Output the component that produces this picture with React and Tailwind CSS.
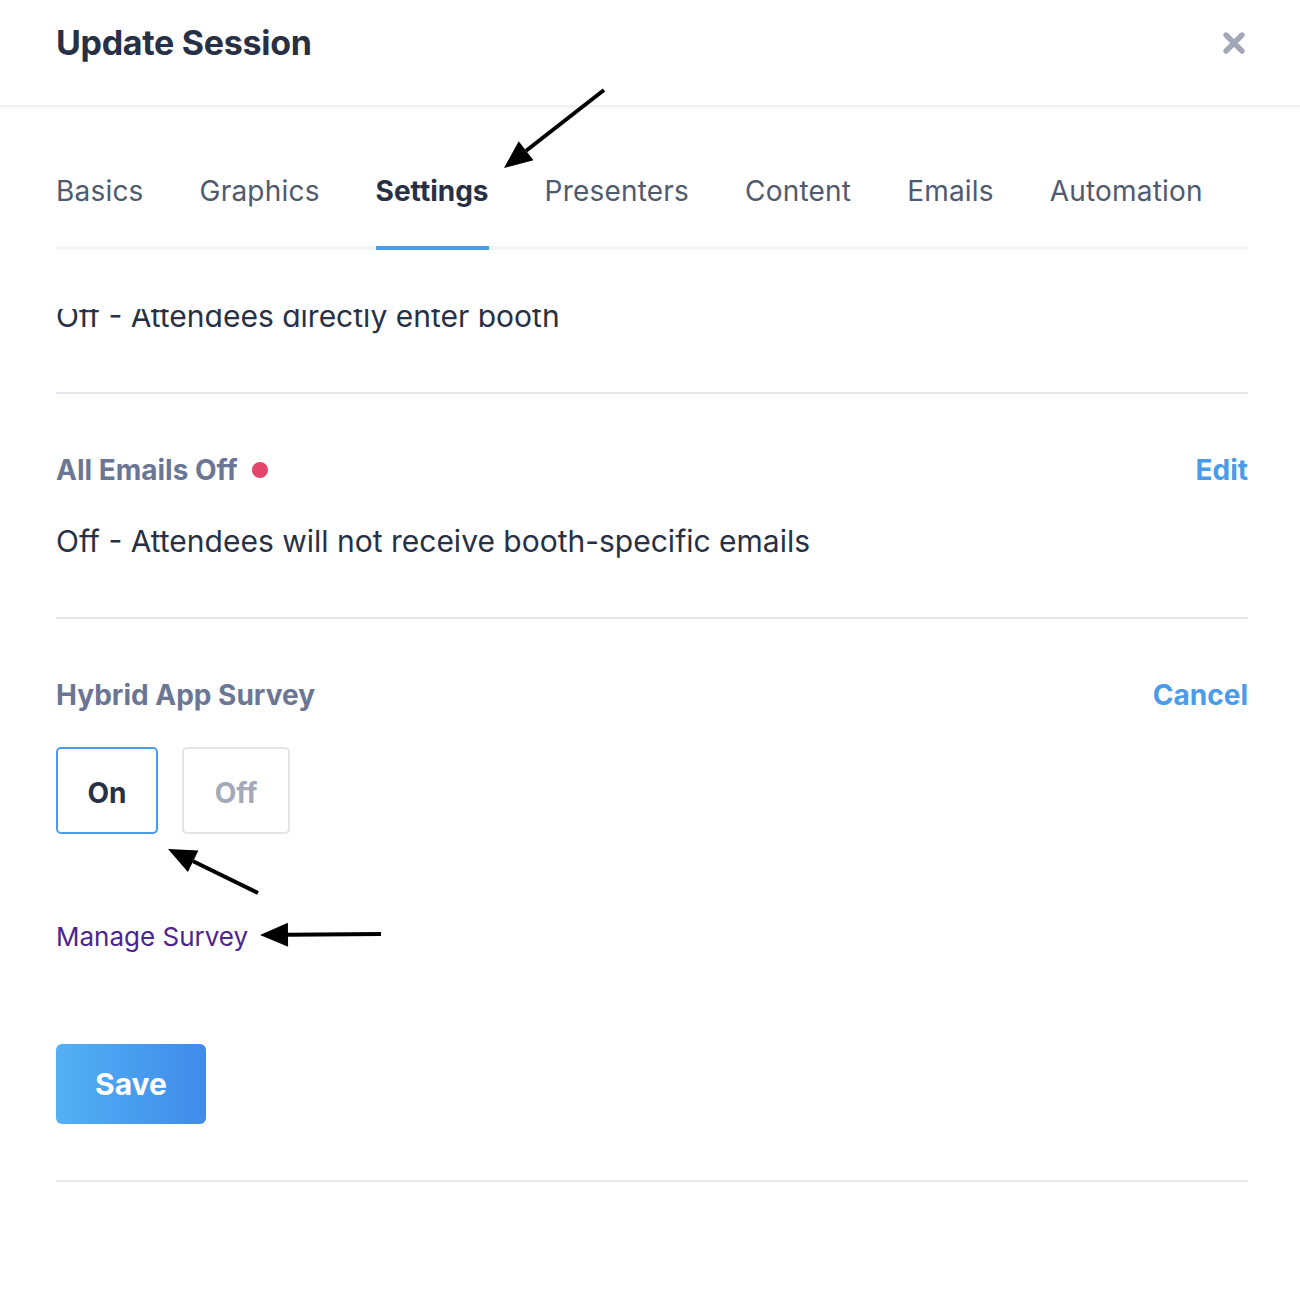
import { X } from 'lucide-react'

const FONT = { fontFamily: 'Inter, "Noto Sans", sans-serif' }

// Annotation arrow drawn over the page
function Arrow({ x1, y1, x2, y2 }) {
  const ang = Math.atan2(y2 - y1, x2 - x1)
  const len = 28
  const half = 12
  const bx = x2 - Math.cos(ang) * len
  const by = y2 - Math.sin(ang) * len
  const px = -Math.sin(ang) * half
  const py = Math.cos(ang) * half
  return (
    <g>
      <line x1={x1} y1={y1} x2={bx} y2={by} stroke="#000" strokeWidth="4" />
      <polygon points={`${x2},${y2} ${bx + px},${by + py} ${bx - px},${by - py}`} fill="#000" />
    </g>
  )
}

function Tab({ label, active }) {
  return (
    <div
      className={
        active
          ? 'text-[28px] leading-[34px] pb-[38px] -mb-[4px] border-b-4 border-[#4a9be8] font-bold text-[#273044]'
          : 'text-[28px] leading-[34px] pb-[38px] text-[#4f5a6e] tracking-[0.2px]'
      }
    >
      {label}
    </div>
  )
}

export default function App() {
  const tabs = ['Basics', 'Graphics', 'Settings', 'Presenters', 'Content', 'Emails', 'Automation']

  return (
    <div className="relative w-[1300px] h-[1306px] bg-white overflow-hidden" style={FONT}>
      {/* ── Header ── */}
      <div className="h-[107px] pl-[56px] pr-[50px] pb-[20px] flex items-center justify-between border-b-2 border-[#f0f1f4] shadow-[0_1px_2px_rgba(0,0,0,0.04)]">
        <h1 className="text-[34px] leading-[40px] font-bold text-[#273044] tracking-[-0.3px]">Update Session</h1>
        <X size={32} strokeWidth={4} className="text-[#a3a8b6]" />
      </div>

      {/* ── Tabs ── */}
      <div className="ml-[56px] mr-[52px] mt-[67px] flex gap-[56px] border-b-4 border-[#f3f4f8]">
        {tabs.map((t) => (
          <Tab key={t} label={t} active={t === 'Settings'} />
        ))}
      </div>

      {/* ── Scroll area ── */}
      <div className="mt-[59px] ml-[56px] mr-[52px] overflow-hidden">
        <p className="-mt-[11px] text-[30px] leading-[36px] text-[#273044]">Off - Attendees directly enter booth</p>
        <div className="mt-[58px] h-[2px] bg-[#e6e7ec]" />

        <div className="pt-[59px] pb-[58px]">
          <div className="flex items-center justify-between">
            <div className="flex items-center gap-[14px]">
              <span className="text-[28px] leading-[34px] font-bold text-[#6b7694]">All Emails Off</span>
              <span className="w-[16px] h-[16px] rounded-full bg-[#e3456c]" />
            </div>
            <span className="text-[28px] leading-[34px] font-bold text-[#4a9be8]">Edit</span>
          </div>
          <p className="mt-[36px] text-[30px] leading-[36px] text-[#273044]">
            Off - Attendees will not receive booth-specific emails
          </p>
        </div>
        <div className="h-[2px] bg-[#e6e7ec]" />

        <div className="pt-[59px] pb-[56px]">
          <div className="flex items-center justify-between">
            <span className="text-[28px] leading-[34px] font-bold text-[#6b7694]">Hybrid App Survey</span>
            <span className="text-[28px] leading-[34px] font-bold text-[#4a9be8]">Cancel</span>
          </div>
          <div className="mt-[35px] flex gap-[24px]">
            <div className="w-[102px] h-[87px] rounded-[5px] border-2 border-[#4a9be8] flex items-center justify-center text-[28px] leading-[34px] pt-[4px] font-bold text-[#273044]">
              On
            </div>
            <div className="w-[108px] h-[87px] rounded-[5px] border-2 border-[#e3e4e9] flex items-center justify-center text-[28px] leading-[34px] pt-[4px] font-bold text-[#a3a9b9]">
              Off
            </div>
          </div>
          <p className="mt-[86px] text-[26px] leading-[34px] text-[#4b2590]">Manage Survey</p>
          <button className="mt-[90px] w-[150px] h-[80px] rounded-[6px] bg-gradient-to-r from-[#54b0f4] to-[#3f8bea] text-white text-[30px] font-bold">
            Save
          </button>
        </div>
        <div className="h-[2px] bg-[#e6e7ec]" />
      </div>

      {/* ── Annotation arrows ── */}
      <svg className="absolute inset-0 pointer-events-none" width="1300" height="1306">
        <Arrow x1={604} y1={90} x2={504} y2={168} />
        <Arrow x1={258} y1={893} x2={168} y2={849} />
        <Arrow x1={381} y1={934} x2={260} y2={935} />
      </svg>
    </div>
  )
}
